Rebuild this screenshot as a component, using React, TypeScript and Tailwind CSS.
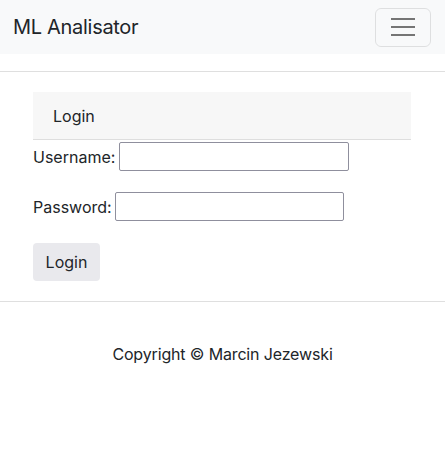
import React from "react";

export default function App() {
  return (
    <div className="w-[445px] min-h-[456px] bg-white text-[#212529] font-['Inter',sans-serif]">
      <nav className="h-[54px] bg-[#f8f9fa] flex items-center justify-between pl-[13px] pr-[14px]">
        <span className="text-[20px] leading-[30px] tracking-[-0.3px]">ML Analisator</span>
        <button className="w-[56px] h-[39px] border border-black/10 rounded-[6px] flex flex-col items-center justify-center gap-[6px]">
          <span className="block w-[24px] h-[2px] bg-[#757575]" />
          <span className="block w-[24px] h-[2px] bg-[#757575]" />
          <span className="block w-[24px] h-[2px] bg-[#757575]" />
        </button>
      </nav>
      <div className="mt-[17px] h-px bg-[#dfdfdf]" />

      <div className="px-[33px] pr-[34px]">
        <div className="mt-[20px] h-[48px] bg-[#f7f7f7] border-b border-[#dedede] flex items-center px-5">
          Login
        </div>
        <form className="flex flex-col">
          <div className="mt-[2px] flex items-center gap-[4px]">
            <label>Username:</label>
            <input type="text" className="w-[230px] h-[29px] border border-[#8f8f9d] rounded-[2px]" />
          </div>
          <div className="mt-[21px] flex items-center gap-[3px]">
            <label>Password:</label>
            <input type="password" className="w-[229px] h-[29px] border border-[#8f8f9d] rounded-[2px]" />
          </div>
          <div className="mt-[22px]">
            <button type="button" className="w-[67px] h-[38px] bg-[#e9e9ed] rounded-[4px]">
              Login
            </button>
          </div>
        </form>
      </div>

      <div className="mt-[20px] h-px bg-[#dfdfdf]" />
      <p className="mt-[40px] text-center leading-[24px] tracking-[-0.15px]">Copyright © Marcin Jezewski</p>
    </div>
  );
}
